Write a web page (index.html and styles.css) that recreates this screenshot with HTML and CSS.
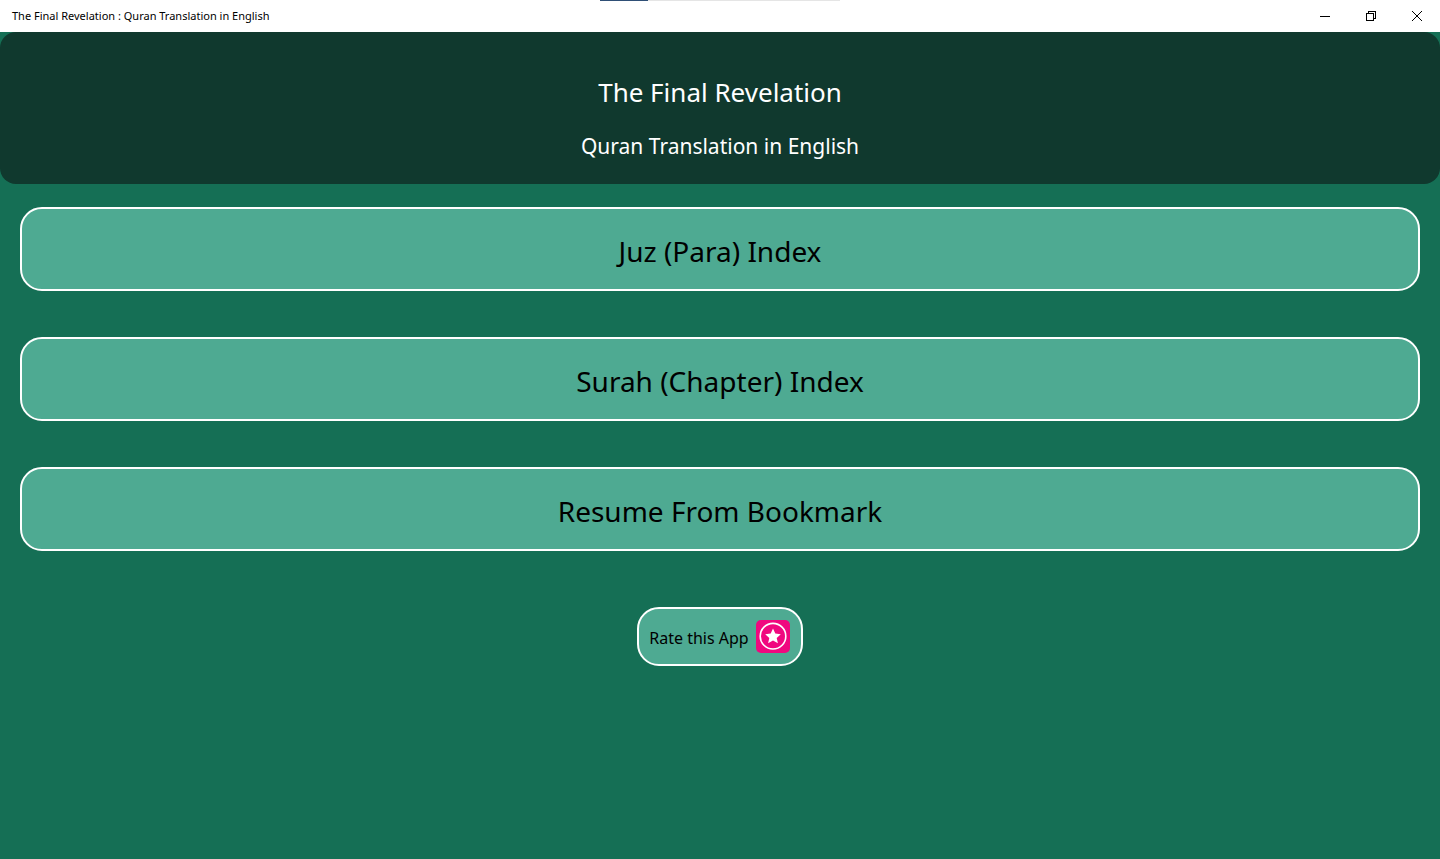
FILE: index.html
```html
<!DOCTYPE html>
<html lang="en">
<head>
    <meta charset="UTF-8">
    <meta name="viewport" content="width=device-width, initial-scale=1.0">
    <title>The Final Revelation : Quran Translation in English</title>
    <link rel="stylesheet" href="styles.css">
</head>
<body>
    <div class="titlebar">
        <div class="progress"><div class="progress-value"></div></div>
        <span class="window-title">The Final Revelation : Quran Translation in English</span>
        <div class="window-controls">
            <button type="button" aria-label="Minimize">
                <svg width="10" height="10" viewBox="0 0 10 10" shape-rendering="crispEdges"><path d="M0 5.5h10"/></svg>
            </button>
            <button type="button" aria-label="Restore">
                <svg width="10" height="10" viewBox="0 0 10 10" shape-rendering="crispEdges"><path d="M.5 2.5h7v7h-7zM2.5 2.5v-2h7v7h-2"/></svg>
            </button>
            <button type="button" aria-label="Close">
                <svg width="10" height="10" viewBox="0 0 10 10"><path d="M0 0l10 10M10 0L0 10"/></svg>
            </button>
        </div>
    </div>

    <header class="header">
        <h1>The Final Revelation</h1>
        <h2>Quran Translation in English</h2>
    </header>

    <main class="menu">
        <button type="button" class="menu-button">Juz (Para) Index</button>
        <button type="button" class="menu-button">Surah (Chapter) Index</button>
        <button type="button" class="menu-button">Resume From Bookmark</button>
        <button type="button" class="rate-button">
            <span class="rate-label">Rate this App</span>
            <svg width="36" height="35" viewBox="0 0 36 35">
                <rect x="1" y="1" width="34" height="33" rx="5" fill="#f0087f"/>
                <circle cx="18" cy="17.2" r="12.8" fill="none" stroke="#fff" stroke-width="1.6"/>
                <path d="M18 9.5l2.3 5.1 5.5.6-4.1 3.7 1.2 5.4-4.9-2.8-4.9 2.8 1.2-5.4-4.1-3.7 5.5-.6z" fill="#fff"/>
            </svg>
        </button>
    </main>
</body>
</html>
```
FILE: styles.css
```css
* {
    box-sizing: border-box;
}

body {
    margin: 0;
    min-height: 100vh;
    background-color: #156f55;
    font-family: "Segoe UI", "Noto Sans", "Open Sans", sans-serif;
    color: #000;
}

button {
    font-family: inherit;
    color: inherit;
    cursor: pointer;
}

.titlebar {
    position: relative;
    display: flex;
    justify-content: space-between;
    align-items: center;
    height: 32px;
    padding-left: 12px;
    background-color: #fff;
}

.window-title {
    font-size: 11px;
    line-height: 16px;
}

/* thin strip on the top edge of the window */
.progress {
    position: absolute;
    top: 0;
    left: 50%;
    width: 240px;
    height: 1px;
    margin-left: -120px;
    background-color: #e5e5e5;
}

.progress-value {
    width: 20%;
    height: 100%;
    background-color: #2f4f76;
}

.window-controls {
    display: flex;
    height: 100%;
}

.window-controls button {
    display: flex;
    justify-content: center;
    align-items: center;
    width: 46px;
    padding: 0;
    border: none;
    background: none;
}

.window-controls svg {
    fill: none;
    stroke: #000;
    stroke-width: 1;
}

.header {
    padding: 40px 20px 20px;
    border-radius: 16px;
    background-color: #10392e;
    color: #fff;
    text-align: center;
}

.header h1 {
    margin: 0 0 16px;
    font-size: 26px;
    font-weight: 400;
    line-height: 40px;
}

.header h2 {
    margin: 0;
    font-size: 21px;
    font-weight: 400;
    line-height: 36px;
}

.menu {
    display: flex;
    flex-direction: column;
    align-items: center;
    gap: 46px;
    padding: 23px 20px;
}

.menu-button,
.rate-button {
    border: 2px solid #fff;
    border-radius: 22px;
    background-color: #4eaa92;
}

.menu-button {
    width: 100%;
    padding: 22px 20px 18px;
    font-size: 28px;
    line-height: 40px;
}

.rate-button {
    display: flex;
    align-items: center;
    gap: 6px;
    margin-top: 10px;
    padding: 10px;
    font-size: 16px;
    line-height: 24px;
}

.rate-label {
    padding-top: 2px;
}
```
